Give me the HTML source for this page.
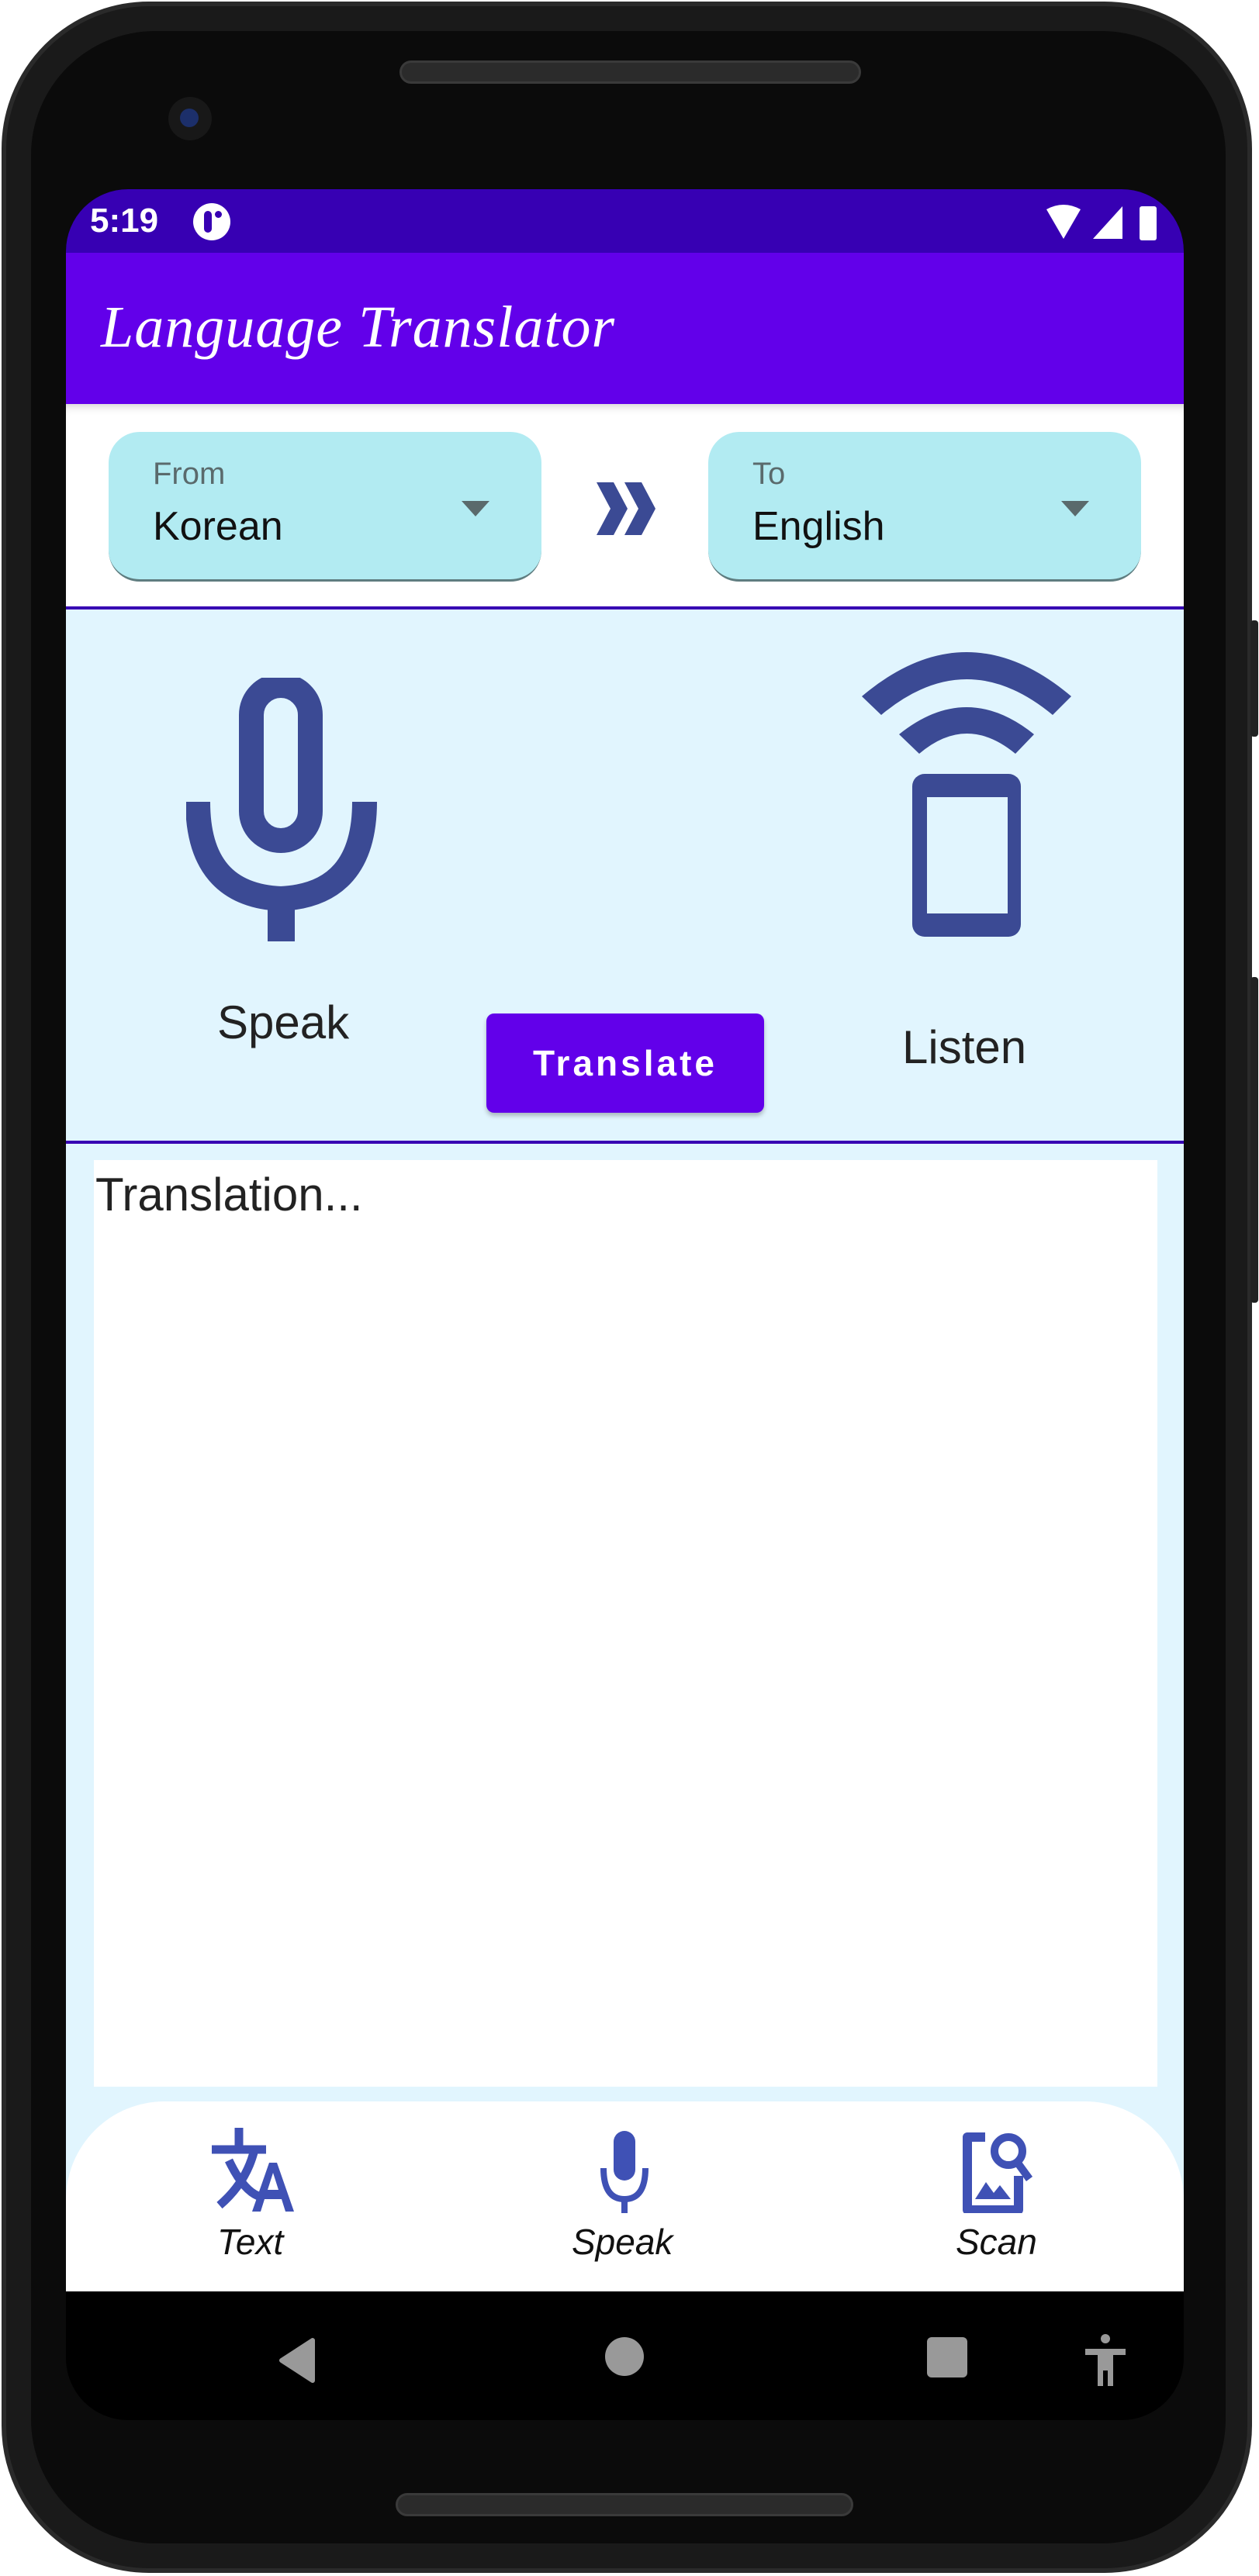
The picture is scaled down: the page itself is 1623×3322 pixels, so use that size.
<!DOCTYPE html>
<html><head><meta charset="utf-8"><style>
*{margin:0;padding:0;box-sizing:border-box}
body{width:1623px;height:3322px;background:#fff;position:relative;overflow:hidden;font-family:"Liberation Sans",sans-serif}
.a{position:absolute}
</style></head><body>
<div class="a" style="left:2px;top:2px;width:1612px;height:3316px;border-radius:190px;background:#1a1a1a;border:6px solid #2a2a2a"></div>
<div class="a" style="left:40px;top:40px;width:1540px;height:3240px;border-radius:160px;background:#0b0b0b"></div>
<div class="a" style="left:515px;top:78px;width:595px;height:30px;border-radius:15px;background:#2b2b2b;border:3px solid #3a3a3a"></div>
<div class="a" style="left:217px;top:125px;width:56px;height:56px;border-radius:50%;background:#181818"><div class="a" style="left:15px;top:15px;width:24px;height:24px;border-radius:50%;background:#1c2f6a"></div></div>
<div class="a" style="left:510px;top:3215px;width:590px;height:30px;border-radius:15px;background:#2b2b2b;border:3px solid #3a3a3a"></div>
<div class="a" style="left:1612px;top:800px;width:10px;height:150px;background:#222;border-radius:4px"></div>
<div class="a" style="left:1612px;top:1260px;width:10px;height:420px;background:#222;border-radius:4px"></div>

<div class="a" style="left:85px;top:244px;width:1441px;height:2877px;border-radius:80px;background:#000;overflow:hidden">
 <div class="a" style="left:0;top:0;width:1441px;height:82px;background:#3700b3"></div>
 <div class="a" style="left:31px;top:16px;color:#fff;font-size:44px;font-weight:bold">5:19</div>
 <div class="a" style="left:164px;top:18px;width:48px;height:48px;border-radius:50%;background:#fff"><div class="a" style="left:14px;top:10px;width:10px;height:28px;border-radius:5px;background:#3700b3"></div><div class="a" style="left:28px;top:10px;width:9px;height:9px;border-radius:50%;background:#3700b3"></div></div>
 <svg class="a" style="left:1260px;top:18px" width="160" height="50"><path d="M4 8 Q26 -4 48 8 L26 46Z" fill="#fff"/><path d="M64 46 L102 46 L102 4Z" fill="#fff"/><rect x="124" y="4" width="22" height="44" rx="3" fill="#fff"/></svg>
 <div class="a" style="left:0;top:82px;width:1441px;height:195px;background:#6200ea"></div>
 <div class="a" style="left:45px;top:135px;color:#fff;font-size:76px;font-style:italic;font-family:'Liberation Serif',serif;letter-spacing:1px">Language Translator</div>
 <div class="a" style="left:0;top:277px;width:1441px;height:263px;background:#fff;box-shadow:inset 0 10px 12px -8px #ccc"></div>
 <div class="a" style="left:55px;top:313px;width:558px;height:193px;border-radius:40px;background:#b2ebf2;border-bottom:3px solid #5f7d80"></div>
 <div class="a" style="left:112px;top:345px;font-size:40px;color:#5a6a6c">From</div>
 <div class="a" style="left:112px;top:405px;font-size:52px;color:#111">Korean</div>
 <svg class="a" style="left:510px;top:402px" width="36" height="20"><path d="M0 0H36L18 20Z" fill="#5a6a6c"/></svg>
 <svg class="a" style="left:682px;top:378px" width="80" height="68"><path d="M2 0H24L42 34L24 68H2L20 34Z M38 0H60L78 34L60 68H38L56 34Z" fill="#3b4a94"/></svg>
 <div class="a" style="left:828px;top:313px;width:558px;height:193px;border-radius:40px;background:#b2ebf2;border-bottom:3px solid #5f7d80"></div>
 <div class="a" style="left:885px;top:345px;font-size:40px;color:#5a6a6c">To</div>
 <div class="a" style="left:885px;top:405px;font-size:52px;color:#111">English</div>
 <svg class="a" style="left:1283px;top:402px" width="36" height="20"><path d="M0 0H36L18 20Z" fill="#5a6a6c"/></svg>
 <div class="a" style="left:0;top:538px;width:1441px;height:4px;background:#3700b3"></div>
 <div class="a" style="left:0;top:542px;width:1441px;height:687px;background:#e1f5fe"></div>
 <svg class="a" style="left:155px;top:630px" width="250" height="340"><rect x="84" y="10" width="76" height="200" rx="38" fill="none" stroke="#3b4a94" stroke-width="32"/><path d="M15 160 Q15 280 122 285 Q230 280 230 160" fill="none" stroke="#3b4a94" stroke-width="32"/><rect x="105" y="285" width="35" height="55" fill="#3b4a94"/></svg>
 <div class="a" style="left:195px;top:1040px;font-size:60px;color:#222">Speak</div>
 <div class="a" style="left:542px;top:1063px;width:358px;height:128px;border-radius:10px;background:#6200ea;box-shadow:0 4px 6px rgba(0,0,0,.25);color:#fff;font-size:46px;font-weight:bold;letter-spacing:4px;text-align:center;line-height:128px">Translate</div>
 <svg class="a" style="left:1025px;top:595px" width="280" height="380"><path d="M1 59 Q136 -55 271 59 L247 83 Q136 -9 26 83Z" fill="#3b4a94"/><path d="M49 108 Q136 38 223 108 L199 133 Q136 81 75 133Z" fill="#3b4a94"/><rect x="66" y="159" width="140" height="210" rx="16" fill="#3b4a94"/><rect x="85" y="189" width="104" height="150" fill="#e1f5fe"/></svg>
 <div class="a" style="left:1078px;top:1072px;font-size:60px;color:#222">Listen</div>
 <div class="a" style="left:0;top:1227px;width:1441px;height:4px;background:#3700b3"></div>
 <div class="a" style="left:0;top:1231px;width:1441px;height:1480px;background:#e1f5fe"></div>
 <div class="a" style="left:36px;top:1252px;width:1371px;height:1195px;background:#fff"></div>
 <div class="a" style="left:38px;top:1262px;font-size:60px;color:#222">Translation...</div>
 <div class="a" style="left:0;top:2466px;width:1441px;height:245px;background:#fff;border-radius:127px 127px 0 0"></div>
 <svg class="a" style="left:188px;top:2500px" width="110" height="110"><path d="M0 28H70M35 0V28M55 28Q45 70 10 100M22 42Q40 80 60 88" stroke="#3f51b5" stroke-width="11" fill="none"/><path d="M52 108L74 45H84L106 108H95L90 92H68L63 108Z M72 80H86L79 58Z" fill="#3f51b5"/></svg>
 <svg class="a" style="left:685px;top:2500px" width="70" height="110"><rect x="21" y="4" width="28" height="64" rx="14" fill="#3f51b5"/><path d="M8 52Q8 92 35 92Q62 92 62 52" stroke="#3f51b5" stroke-width="8" fill="none"/><rect x="31" y="90" width="8" height="20" fill="#3f51b5"/></svg>
 <svg class="a" style="left:1150px;top:2500px" width="110" height="110"><path d="M35 12H12V106H78V62" stroke="#3f51b5" stroke-width="12" fill="none" stroke-linejoin="round"/><circle cx="65" cy="30" r="18" stroke="#3f51b5" stroke-width="10" fill="none"/><path d="M76 44L92 66" stroke="#3f51b5" stroke-width="10"/><path d="M22 92L36 70L46 84L54 74L68 92Z" fill="#3f51b5"/></svg>
 <div class="a" style="left:195px;top:2620px;font-size:46px;font-style:italic;color:#111">Text</div>
 <div class="a" style="left:652px;top:2620px;font-size:46px;font-style:italic;color:#111">Speak</div>
 <div class="a" style="left:1147px;top:2620px;font-size:46px;font-style:italic;color:#111">Scan</div>
 <svg class="a" style="left:270px;top:2770px" width="60" height="60"><path d="M48 4V56L8 30Z" fill="#999" stroke="#999" stroke-width="6" stroke-linejoin="round"/></svg>
 <div class="a" style="left:695px;top:2770px;width:50px;height:50px;border-radius:50%;background:#999"></div>
 <div class="a" style="left:1110px;top:2770px;width:52px;height:52px;border-radius:6px;background:#999"></div>
 <svg class="a" style="left:1312px;top:2765px" width="56" height="70"><circle cx="28" cy="7" r="6" fill="#999"/><path d="M2 20H54V28H38V68H31V48H25V68H18V28H2Z" fill="#999"/></svg>
</div>
</body></html>
